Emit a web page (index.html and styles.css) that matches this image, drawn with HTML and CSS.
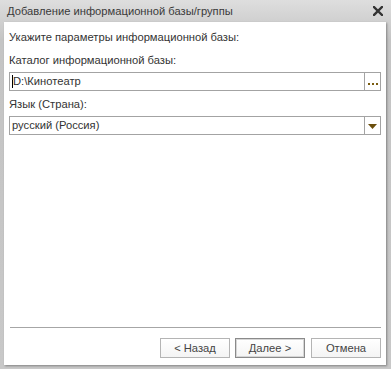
FILE: index.html
```html
<!DOCTYPE html>
<html lang="ru">
<head>
  <meta charset="UTF-8">
  <title>Добавление информационной базы/группы</title>
  <link rel="stylesheet" href="styles.css">
</head>
<body>
  <div class="window">
    <div class="titlebar">
      <span class="title">Добавление информационной базы/группы</span>
      <svg class="close" width="10" height="10" viewBox="0 0 10 10">
        <path d="M1 1 L9 9 M9 1 L1 9" stroke="#333" stroke-width="2.4" stroke-linecap="square"/>
      </svg>
    </div>
    <div class="content">
      <div class="form">
        <div class="hint">Укажите параметры информационной базы:</div>
        <div class="label label-first">Каталог информационной базы:</div>
        <div class="field">
          <div class="value"><span class="caret"></span>D:\Кинотеатр</div>
          <div class="field-btn dots">
            <svg width="10" height="3" viewBox="0 0 10 3">
              <rect x="0" y="0" width="2" height="2" fill="#7a5c10"/>
              <rect x="4" y="0" width="2" height="2" fill="#7a5c10"/>
              <rect x="8" y="0" width="2" height="2" fill="#7a5c10"/>
            </svg>
          </div>
        </div>
        <div class="label">Язык (Страна):</div>
        <div class="field">
          <div class="value">русский (Россия)</div>
          <div class="field-btn">
            <svg width="9" height="5" viewBox="0 0 9 5">
              <path d="M0 0 H9 L4.5 5 Z" fill="#6b4e0c"/>
            </svg>
          </div>
        </div>
      </div>
      <div class="footer">
        <div class="separator"></div>
        <div class="buttons">
          <button type="button">&lt; Назад</button>
          <button type="button" class="default">Далее &gt;</button>
          <button type="button" class="cancel">Отмена</button>
        </div>
      </div>
    </div>
  </div>
</body>
</html>
```

FILE: styles.css
```css
* {
  margin: 0;
  padding: 0;
  box-sizing: border-box;
}
html, body {
  width: 391px;
  height: 369px;
  overflow: hidden;
  background: #c6c6c6;
  font-family: "Liberation Sans", Arial, sans-serif;
  font-size: 11.2px;
  color: #333;
}
.window {
  height: 369px;
  display: flex;
  flex-direction: column;
  background: linear-gradient(#dedede, #c4c4c4 40px, #c8c8c8);
}
.titlebar {
  height: 22px;
  display: flex;
  align-items: center;
  justify-content: space-between;
  padding: 0 8px 0 7px;
}
.title {
  color: #3a3a3a;
  line-height: 15px;
}
.close {
  margin-top: -1px;
}
.content {
  flex: 1;
  margin: 0 5px 4px 4px;
  background: #fff;
  box-shadow: 1px 1px 2px rgba(0, 0, 0, 0.35);
  display: flex;
  flex-direction: column;
  justify-content: space-between;
  padding: 8px 5px 7px 5px;
}
.hint, .label {
  line-height: 15px;
}
.label {
  margin-top: 6px;
  margin-bottom: 4px;
}
.label-first {
  margin-top: 8px;
}
.field {
  height: 19px;
  border: 1px solid #a3a3a3;
  display: flex;
}
.value {
  flex: 1;
  display: flex;
  align-items: center;
  padding-left: 2px;
  line-height: 15px;
}
.caret {
  display: inline-block;
  width: 1px;
  height: 13px;
  background: #000;
}
.field-btn {
  width: 16px;
  border-left: 1px solid #a3a3a3;
  display: flex;
  align-items: center;
  justify-content: center;
}
.field .field-btn svg {
  margin-top: 2px;
}
.field .dots svg {
  margin-top: 6px;
}
.separator {
  height: 1px;
  background: #a6a6a6;
  margin: 0 0 10px 1px;
}
.buttons {
  display: flex;
  justify-content: flex-end;
  gap: 5px;
}
button {
  width: 70px;
  height: 20px;
  border: 1px solid #b4b4b4;
  background: linear-gradient(#ffffff, #f4f4f4);
  font-family: "Liberation Sans", Arial, sans-serif;
  font-size: 11.2px;
  color: #444;
  line-height: 16px;
}
button.default {
  border: 1px solid #8a8a8a;
  box-shadow: inset 0 0 0 1px #d6d6d6;
}
button.cancel {
  margin-left: 1px;
}
```
